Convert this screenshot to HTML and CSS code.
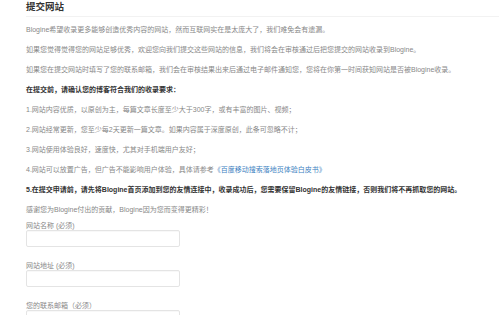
FILE: index.html
```html
<!DOCTYPE html>
<html lang="zh-CN">
<head>
    <meta charset="UTF-8">
    <title>提交网站</title>
    <link rel="stylesheet" href="styles.css">
</head>
<body>
    <div class="submit-page">
        <div class="page-title">提交网站</div>

        <div class="content">
            <p>Blogine希望收录更多能够创造优秀内容的网站，然而互联网实在是太庞大了，我们难免会有遗漏。</p>
            <p>如果您觉得觉得您的网站足够优秀，欢迎您向我们提交这些网站的信息，我们将会在审核通过后把您提交的网站收录到Blogine。</p>
            <p>如果您在提交网站时填写了您的联系邮箱，我们会在审核结果出来后通过电子邮件通知您，您将在你第一时间获知网站是否被Blogine收录。</p>
            <p class="strong">在提交前，请确认您的博客符合我们的收录要求：</p>
            <p>1.网站内容优质，以原创为主，每篇文章长度至少大于300字，或有丰富的图片、视频；</p>
            <p>2.网站经常更新，您至少每2天更新一篇文章。如果内容属于深度原创，此条可忽略不计；</p>
            <p>3.网站使用体验良好，速度快，尤其对手机端用户友好；</p>
            <p>4.网站可以放置广告，但广告不能影响用户体验，具体请参考<a href="#">《百度移动搜索落地页体验白皮书》</a></p>
            <p class="strong">5.在提交申请前，请先将Blogine首页添加到您的友情连接中，收录成功后，您需要保留Blogine的友情链接，否则我们将不再抓取您的网站。</p>
            <p>感谢您为Blogine付出的贡献，Blogine因为您而变得更精彩！</p>
        </div>

        <form class="submit-form">
            <div class="form-row">
                <label>网站名称 (必须)</label>
                <input type="text">
            </div>
            <div class="form-row">
                <label>网站地址 (必须)</label>
                <input type="text">
            </div>
            <div class="form-row">
                <label>您的联系邮箱（必须）</label>
                <input type="text">
            </div>
        </form>
    </div>
</body>
</html>
```

FILE: styles.css
```css
body {
    margin: 0;
    padding: 0;
    background: #fff;
    font-family: "Liberation Sans", "Noto Sans CJK SC", sans-serif;
    color: #888;
}

.submit-page {
    padding: 0 0 0 26px;
}

.page-title {
    font-size: 9.5px;
    line-height: 14px;
    font-weight: bold;
    color: #333;
    padding-bottom: 2px;
    border-bottom: 1px solid #f2f2f2;
}

.content {
    padding-top: 7px;
}

.content p {
    margin: 0 0 8px;
    font-size: 7px;
    line-height: 12px;
}

.content p:last-child {
    margin-bottom: 6px;
}

.content p.strong {
    font-weight: bold;
    color: #333;
}

.content a {
    color: #3d7fc1;
    text-decoration: none;
}

.submit-form {
    margin: 0;
}

.form-row {
    margin-bottom: 15px;
}

.form-row label {
    display: block;
    font-size: 7px;
    line-height: 8px;
    color: #888;
}

.form-row input {
    display: block;
    box-sizing: border-box;
    width: 154px;
    height: 17px;
    margin: 0;
    border: 1px solid #e4e4e4;
    border-radius: 2px;
    box-shadow: inset 0 1px 1px rgba(0, 0, 0, 0.03);
    background: #fff;
}
```
